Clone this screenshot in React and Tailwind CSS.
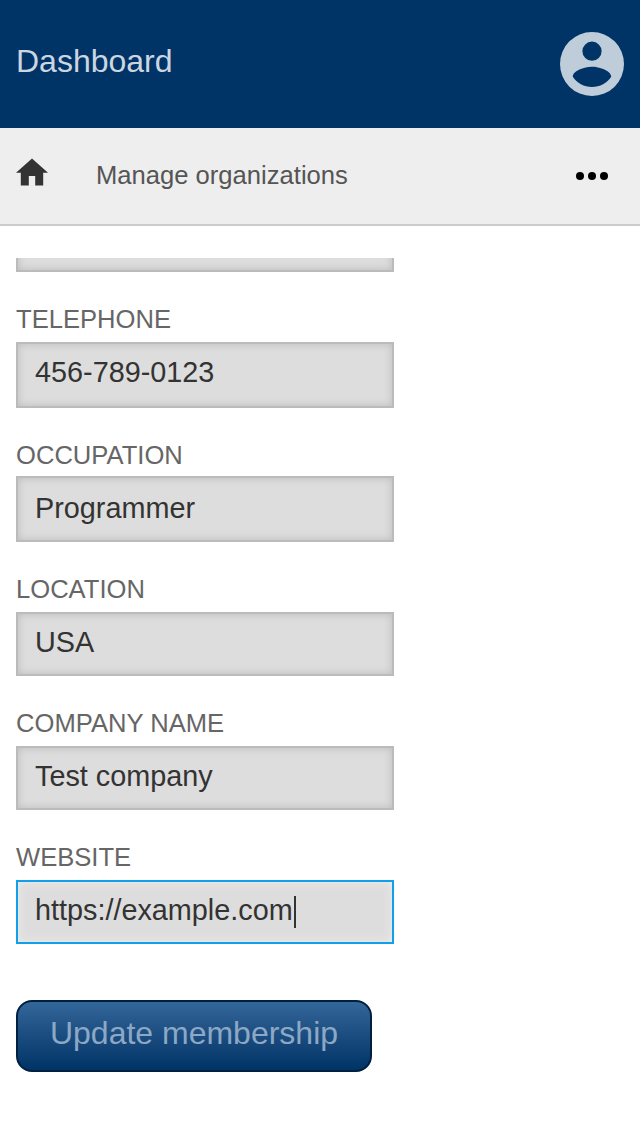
const fields = [
  { label: "TELEPHONE", value: "456-789-0123", labelHeight: "h-10", box: "h-[66px] pt-[10px]" },
  { label: "OCCUPATION", value: "Programmer", labelHeight: "h-[38px]", box: "h-[66px] pt-3" },
  { label: "LOCATION", value: "USA", labelHeight: "h-10", box: "h-16 pt-[10px]" },
  { label: "COMPANY NAME", value: "Test company", labelHeight: "h-10", box: "h-16 pt-[10px]" },
  { label: "WEBSITE", value: "https://example.com", labelHeight: "h-10", box: "h-16 pt-[10px]", focused: true },
];

function Field({ label, value, labelHeight, box, focused }) {
  return (
    <div className="pt-[30px]">
      <div className={`${labelHeight} text-[25.6px] leading-[34px] text-[#666]`}>{label}</div>
      <div
        className={`${box} flex w-[378px] items-start border-2 bg-[#dddddd] pl-[17px] text-[28.8px] leading-[36px] text-[#333] ${focused ? "border-[#129fea] shadow-[inset_0_0_8px_#eeeeee]" : "border-[#bbbbbb] shadow-[inset_0_0_8px_#bbbbbb]"}`}
      >
        <span>{value}</span>
        {focused && <span className="ml-px mt-1 h-8 w-[2px] bg-[#333]" />}
      </div>
    </div>
  );
}

export default function App() {
  return (
    <div className="flex h-[1136px] w-[640px] flex-col overflow-hidden bg-white font-['Liberation_Sans',sans-serif]">
      <header className="flex h-32 shrink-0 items-center justify-between bg-[#003366] px-4">
        <h1 className="mb-[6px] text-[32px] leading-9 text-[#ccd6e0]">Dashboard</h1>
        <svg className="size-16" viewBox="0 0 64 64" fill="#bfccd9">
          <path fillRule="evenodd" d="M32 0a32 32 0 1 0 0 64a32 32 0 0 0 0-64ZM32 9.6a9.6 9.6 0 1 1 0 19.2a9.6 9.6 0 0 1 0-19.2ZM32 55c-8 0-15.1-4.1-19.2-10.3C12.9 38.3 25.6 34.8 32 34.8s19.1 3.5 19.2 9.9C47.1 50.9 40 55 32 55Z" />
        </svg>
      </header>
      <nav className="flex h-[98px] shrink-0 items-center border-b-2 border-[#cccccc] bg-[#eeeeee] px-4">
        <svg className="mb-2 h-7 w-8" viewBox="0 0 32 28" fill="#333">
          <path d="M16 .4 0 14.8h4.8v12.8h8v-9.6h6.4v9.6h8V14.8H32Z" />
        </svg>
        <span className="mb-[2px] ml-12 text-[25.6px] leading-8 text-[#555]">Manage organizations</span>
        <svg className="ml-auto mr-4 h-8 w-8" viewBox="0 0 32 32">
          <circle cx="4" cy="16" r="4" /><circle cx="16" cy="16" r="4" /><circle cx="28" cy="16" r="4" />
        </svg>
      </nav>
      <main className="mt-8 flex flex-col px-4">
        <div className="flex h-[14px] items-end overflow-hidden">
          <div className="h-16 w-[378px] shrink-0 border-2 border-[#bbbbbb] bg-[#dddddd] shadow-[inset_0_0_8px_#bbbbbb]" />
        </div>
        {fields.map((field) => <Field key={field.label} {...field} />)}
        <button className="mt-14 h-[72px] w-[356px] rounded-2xl border-2 border-[#00203f] bg-linear-to-b from-[#336699] to-[#003366] pb-[6px] text-[32px] leading-9 text-[#8ca8c5]">Update membership</button>
      </main>
    </div>
  );
}
